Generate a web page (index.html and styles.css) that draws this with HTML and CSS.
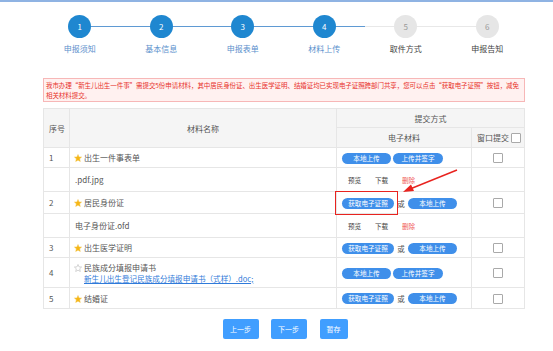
FILE: index.html
```html
<!doctype html>
<html lang="zh-CN">
    <head>
        <meta charset="UTF-8" />
        <meta name="viewport" content="width=device-width, initial-scale=1" />
        <link rel="stylesheet" href="styles.css">
        <title>材料上传</title>
    </head>
    <body>
        <ol class="steps">
            <li class="step done"><span class="dot">1</span><span class="label">申报须知</span></li>
            <li class="step done"><span class="dot">2</span><span class="label">基本信息</span></li>
            <li class="step done"><span class="dot">3</span><span class="label">申报表单</span></li>
            <li class="step done"><span class="dot">4</span><span class="label">材料上传</span></li>
            <li class="step"><span class="dot">5</span><span class="label">取件方式</span></li>
            <li class="step"><span class="dot">6</span><span class="label">申报告知</span></li>
        </ol>

        <div class="content">
            <div class="notice">我市办理“新生儿出生一件事”需提交5份申请材料，其中居民身份证、出生医学证明、结婚证均已实现电子证照跨部门共享，您可以点击“获取电子证照”按钮，减免相关材料提交。</div>

            <table class="materials">
                <colgroup>
                    <col class="c-no">
                    <col class="c-name">
                    <col class="c-elec">
                    <col class="c-win">
                </colgroup>
                <thead>
                    <tr class="h1">
                        <th rowspan="2" class="no-head">序号</th>
                        <th rowspan="2">材料名称</th>
                        <th colspan="2">提交方式</th>
                    </tr>
                    <tr class="h2">
                        <th>电子材料</th>
                        <th class="win-head">窗口提交 <span class="check"></span></th>
                    </tr>
                </thead>
                <tbody>
                    <tr class="main">
                        <td>1</td>
                        <td><svg class="star" viewBox="0 0 10 10"><polygon points="5,0.6 6.3,3.6 9.5,3.8 7.1,6 7.9,9.4 5,7.7 2.1,9.4 2.9,6 0.5,3.8 3.7,3.6" /></svg>出生一件事表单</td>
                        <td><span class="pill">本地上传</span><span class="pill">上传并签字</span></td>
                        <td class="mid"><span class="check"></span></td>
                    </tr>
                    <tr class="file">
                        <td></td>
                        <td>.pdf.jpg</td>
                        <td class="ops"><span>预览</span><span>下载</span><span class="del">删除</span></td>
                        <td></td>
                    </tr>
                    <tr class="main tall">
                        <td>2</td>
                        <td><svg class="star" viewBox="0 0 10 10"><polygon points="5,0.6 6.3,3.6 9.5,3.8 7.1,6 7.9,9.4 5,7.7 2.1,9.4 2.9,6 0.5,3.8 3.7,3.6" /></svg>居民身份证</td>
                        <td><span class="pill wide marked">获取电子证照</span><span class="or">或</span><span class="pill">本地上传</span></td>
                        <td class="mid"><span class="check"></span></td>
                    </tr>
                    <tr class="file">
                        <td></td>
                        <td>电子身份证.ofd</td>
                        <td class="ops"><span>预览</span><span>下载</span><span class="del">删除</span></td>
                        <td></td>
                    </tr>
                    <tr class="main">
                        <td>3</td>
                        <td><svg class="star" viewBox="0 0 10 10"><polygon points="5,0.6 6.3,3.6 9.5,3.8 7.1,6 7.9,9.4 5,7.7 2.1,9.4 2.9,6 0.5,3.8 3.7,3.6" /></svg>出生医学证明</td>
                        <td><span class="pill wide">获取电子证照</span><span class="or">或</span><span class="pill">本地上传</span></td>
                        <td class="mid"><span class="check"></span></td>
                    </tr>
                    <tr class="main double">
                        <td>4</td>
                        <td>
                            <svg class="star empty" viewBox="0 0 10 10"><polygon points="5,0.6 6.3,3.6 9.5,3.8 7.1,6 7.9,9.4 5,7.7 2.1,9.4 2.9,6 0.5,3.8 3.7,3.6" /></svg>民族成分填报申请书<br>
                            <a class="tpl" href="#">新生儿出生登记民族成分填报申请书（式样）.doc;</a>
                        </td>
                        <td><span class="pill">本地上传</span><span class="pill">上传并签字</span></td>
                        <td class="mid"><span class="check"></span></td>
                    </tr>
                    <tr class="main last">
                        <td>5</td>
                        <td><svg class="star" viewBox="0 0 10 10"><polygon points="5,0.6 6.3,3.6 9.5,3.8 7.1,6 7.9,9.4 5,7.7 2.1,9.4 2.9,6 0.5,3.8 3.7,3.6" /></svg>结婚证</td>
                        <td><span class="pill wide">获取电子证照</span><span class="or">或</span><span class="pill">本地上传</span></td>
                        <td class="mid"><span class="check"></span></td>
                    </tr>
                </tbody>
            </table>

            <!-- hint arrow pointing at the e-licence button -->
            <svg class="hint-arrow" width="60" height="28" viewBox="0 0 60 28">
                <line x1="57" y1="2" x2="10" y2="21" stroke="#e8231f" stroke-width="1.4" />
                <polygon points="3,24 11,16.5 14,23" fill="#e8231f" />
            </svg>

            <div class="actions">
                <button class="btn">上一步</button>
                <button class="btn">下一步</button>
                <button class="btn">暂存</button>
            </div>
        </div>
    </body>
</html>
```

FILE: styles.css
```css
html,
body {
    margin: 0;
    padding: 0;
}
body {
    background: #fff;
    border-top: 2px solid #8fb3e3;
    font-family: "Noto Sans CJK SC", "Noto Sans", sans-serif;
    color: #555;
}

/* -- STEPS -- */

.steps {
    display: flex;
    list-style: none;
    margin: 13px 25px 0 39px;
    padding: 0;
}
.step {
    flex: 1;
    display: flex;
    flex-direction: column;
    align-items: center;
    position: relative;
}
.step::before,
.step::after {
    content: "";
    position: absolute;
    top: 11px;
    width: 50%;
    height: 1px;
    background: #e8e8e8;
}
.step::before {
    left: 0;
}
.step::after {
    right: 0;
}
.step:first-child::before,
.step:last-child::after {
    display: none;
}
.step.done::before,
.step.done::after {
    background: #5f9ad3;
}
.dot {
    position: relative;
    z-index: 1;
    width: 23px;
    height: 23px;
    border-radius: 50%;
    background: #e6e6e6;
    color: #999;
    font-size: 8px;
    line-height: 23px;
    text-align: center;
}
.done .dot {
    background: #1f87d0;
    color: #fff;
}
.label {
    margin-top: 5px;
    font-size: 8px;
    line-height: 11px;
    color: #444;
}
.done .label {
    color: #5b8fcc;
}

/* -- CONTENT -- */

.content {
    position: relative;
    margin: 24px 28px 0 43px;
}
.notice {
    border: 1px solid #f7b7b7;
    background: #fff1f0;
    color: #e8322b;
    font-size: 6.5px;
    letter-spacing: -0.07px;
    line-height: 10px;
    padding: 1px 0 0 2px;
    height: 21px;
}

.materials {
    width: 100%;
    margin-top: 6px;
    border-collapse: collapse;
    table-layout: fixed;
    font-size: 8px;
    color: #555;
}
.c-no {
    width: 26px;
}
.c-elec {
    width: 135px;
}
.c-win {
    width: 53px;
}
.materials th,
.materials td {
    border: 1px solid #e6e6e6;
    padding: 0 5px;
    white-space: nowrap;
    overflow: visible;
}
.materials th {
    background: #f5f5f5;
    font-weight: normal;
    text-align: center;
}
.materials .no-head {
    text-align: left;
}
.h1 {
    height: 19px;
}
.h2 {
    height: 20px;
}
.win-head {
    padding: 0 2px;
}
.main {
    height: 20px;
}
.main.tall {
    height: 22px;
}
.main.double {
    height: 30px;
}
.main.last {
    height: 21px;
}
.file {
    height: 24px;
}
.main td:nth-child(2) {
    padding-left: 4px;
}
.mid {
    text-align: center;
}

.star {
    width: 8px;
    height: 8px;
    margin-right: 2px;
    vertical-align: -1px;
    fill: #f6b614;
    stroke: #f3c652;
    stroke-width: 0.6;
}
.star.empty {
    fill: #fff;
    stroke: #bdbdbd;
    stroke-width: 0.8;
}
.tpl {
    display: inline-block;
    margin-left: 10px;
    color: #2f7ad9;
    font-size: 7.6px;
    line-height: 11px;
}

.pill {
    position: relative;
    display: inline-block;
    height: 11px;
    line-height: 11px;
    width: 49px;
    border-radius: 6px;
    background: #3f8fea;
    color: #fff;
    font-size: 6.6px;
    text-align: center;
    vertical-align: middle;
}
.pill + .pill {
    margin-left: 2px;
    width: 50px;
}
.pill.wide {
    width: 52px;
}
.or + .pill {
    width: 49px;
    margin-left: 0;
}
.pill.marked::after {
    content: "";
    position: absolute;
    left: -7px;
    right: -4px;
    top: -7px;
    bottom: -6px;
    border: 1.5px solid #e8231f;
}
.or {
    display: inline-block;
    width: 14px;
    text-align: center;
    font-size: 7.5px;
    vertical-align: middle;
}

.ops {
    font-size: 6.6px;
    color: #444;
}
.ops span {
    display: inline-block;
    width: 27px;
}
.ops span:first-child {
    margin-left: 6px;
}
.ops .del {
    color: #f05a5a;
}

.check {
    display: inline-block;
    width: 8px;
    height: 8px;
    border: 1px solid #a9a9a9;
    border-radius: 1px;
    background: #fff;
    vertical-align: middle;
}

.hint-arrow {
    position: absolute;
    left: 357px;
    top: 90px;
}

/* -- ACTIONS -- */

.actions {
    display: flex;
    justify-content: center;
    gap: 12px;
    margin-top: 10px;
    padding-left: 2px;
}
.btn {
    height: 20px;
    width: 36px;
    padding: 0;
    border: none;
    border-radius: 2px;
    background: #409eff;
    color: #fff;
    font-family: inherit;
    font-size: 7px;
}
.btn:last-child {
    width: 28px;
    margin-left: 1px;
}
```
